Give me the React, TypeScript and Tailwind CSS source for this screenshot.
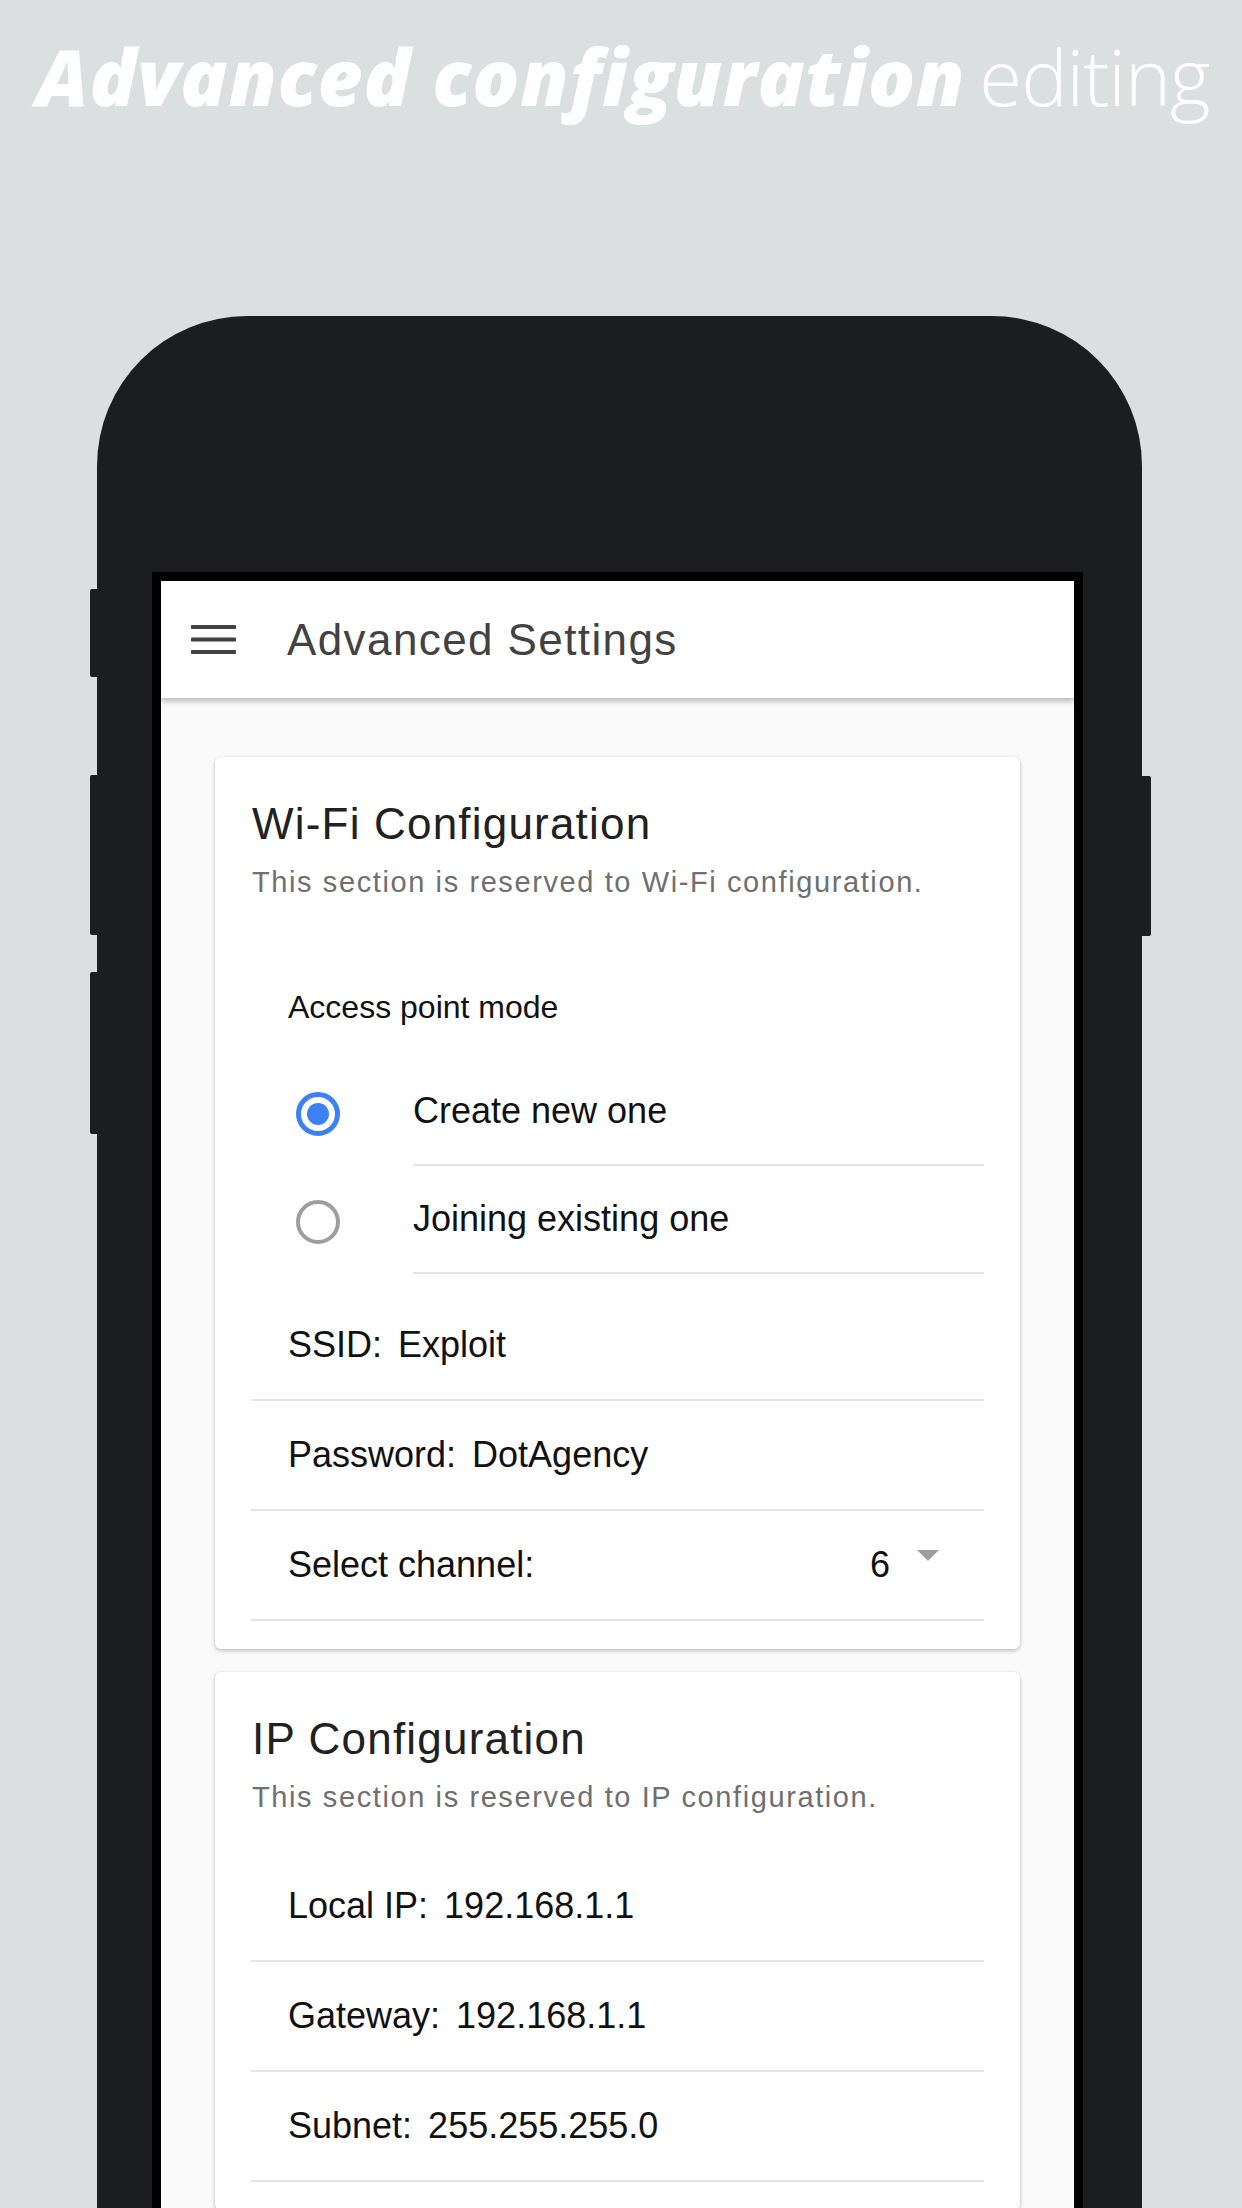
import React from "react";

function Radio({ checked }: { checked: boolean }) {
  return checked ? (
    <div className="flex h-[44px] w-[44px] shrink-0 items-center justify-center rounded-full border-[5px] border-[#3d80f5]">
      <div className="h-[22px] w-[22px] rounded-full bg-[#3d80f5]" />
    </div>
  ) : (
    <div className="h-[44px] w-[44px] shrink-0 rounded-full border-[4px] border-[#9e9e9e]" />
  );
}

function RadioRow({ checked, label }: { checked: boolean; label: string }) {
  return (
    <div className="flex h-[108px] items-center pl-[45px]">
      <div className="mt-[3px]">
        <Radio checked={checked} />
      </div>
      <div className="ml-[73px] flex h-[108px] flex-1 items-center border-b-2 border-[#e4e4e6] text-[36px] leading-[40px] text-[#111]">
        {label}
      </div>
    </div>
  );
}

function FieldRow({ label, value }: { label: string; value: string }) {
  return (
    <div className="flex h-[110px] items-center border-b-2 border-[#e4e4e6] pl-[37px] text-[36px] leading-[40px] text-[#111]">
      <span>{label}</span>
      <span className="ml-[16px]">{value}</span>
    </div>
  );
}

function CardHeader({ title, subtitle }: { title: string; subtitle: string }) {
  return (
    <>
      <h2 className="pl-[1px] text-[44px] leading-[48px] tracking-[1.2px] text-[#212121]">{title}</h2>
      <p className="mt-[18px] pl-[1px] text-[29px] leading-[32px] tracking-[1.6px] text-[#6f6f6f]">{subtitle}</p>
    </>
  );
}

export default function App() {
  return (
    <div className="h-[2208px] w-[1242px] overflow-hidden bg-[#dcdfe0] font-['Liberation_Sans',Arial,sans-serif]">
      <h1 className="flex items-baseline whitespace-nowrap pl-[36px] pt-[37px] font-['Open_Sans',sans-serif] text-[78px] leading-[78px] text-white">
        <span className="font-extrabold italic tracking-[0.7px]">Advanced configuration</span>
        <span className="ml-[14px] font-light tracking-[-1px]">editing</span>
      </h1>

      <div className="relative ml-[97px] mt-[201px] h-[1900px] w-[1045px] rounded-t-[150px] bg-[#1c1d1f]">
        {/* side buttons */}
        <div className="absolute left-[-7px] top-[273px] h-[88px] w-[8px] rounded-l-[2px] bg-[#1c1d1f]" />
        <div className="absolute left-[-7px] top-[459px] h-[160px] w-[8px] rounded-l-[2px] bg-[#1c1d1f]" />
        <div className="absolute left-[-7px] top-[656px] h-[162px] w-[8px] rounded-l-[2px] bg-[#1c1d1f]" />
        <div className="absolute right-[-9px] top-[460px] h-[160px] w-[10px] rounded-r-[2px] bg-[#1c1d1f]" />

        <div className="ml-[55px] h-[1650px] w-[931px] translate-y-[256px] bg-black px-[9px] pt-[9px]">
          <div className="h-full bg-[#fafafa]">
            {/* App bar */}
            <div className="relative z-10 flex h-[117px] items-center bg-white pl-[30px] shadow-[0_3px_6px_rgba(0,0,0,0.28)]">
              <svg width="45" height="29" viewBox="0 0 45 29">
                <rect x="0" y="0" width="45" height="4" rx="0.8" fill="#424242" />
                <rect x="0" y="12.5" width="45" height="4" rx="0.8" fill="#424242" />
                <rect x="0" y="25" width="45" height="4" rx="0.8" fill="#424242" />
              </svg>
              <span className="ml-[51px] text-[44px] leading-[52px] tracking-[1.4px] text-[#424242]">Advanced Settings</span>
            </div>

            <div className="px-[54px] pt-[59px]">
              {/* Wi-Fi card */}
              <div className="rounded-[6px] bg-white px-[36px] pb-[28px] pt-[43px] shadow-[0_2px_4px_rgba(0,0,0,0.22),0_0_2px_rgba(0,0,0,0.08)]">
                <CardHeader title="Wi-Fi Configuration" subtitle="This section is reserved to Wi-Fi configuration." />
                <div className="mt-[89px] pl-[37px] text-[32px] leading-[40px] text-[#111]">Access point mode</div>
                <div className="mt-[31px]">
                  <RadioRow checked label="Create new one" />
                  <RadioRow checked={false} label="Joining existing one" />
                </div>
                <div className="mt-[17px]">
                  <FieldRow label="SSID:" value="Exploit" />
                  <FieldRow label="Password:" value="DotAgency" />
                  <div className="flex h-[110px] items-center border-b-2 border-[#e4e4e6] pl-[37px] pr-[45px] text-[36px] leading-[40px] text-[#111]">
                    <span>Select channel:</span>
                    <div className="ml-auto flex items-center">
                      <span>6</span>
                      <svg className="mb-[20px] ml-[27px]" width="22" height="11" viewBox="0 0 22 11">
                        <path d="M0 0 H22 L11 11 Z" fill="#9e9e9e" />
                      </svg>
                    </div>
                  </div>
                </div>
              </div>

              {/* IP card */}
              <div className="mt-[23px] rounded-[6px] bg-white px-[36px] pb-[28px] pt-[43px] shadow-[0_2px_4px_rgba(0,0,0,0.22),0_0_2px_rgba(0,0,0,0.08)]">
                <CardHeader title="IP Configuration" subtitle="This section is reserved to IP configuration." />
                <div className="mt-[39px]">
                  <FieldRow label="Local IP:" value="192.168.1.1" />
                  <FieldRow label="Gateway:" value="192.168.1.1" />
                  <FieldRow label="Subnet:" value="255.255.255.0" />
                </div>
              </div>
            </div>
          </div>
        </div>
      </div>
    </div>
  );
}
